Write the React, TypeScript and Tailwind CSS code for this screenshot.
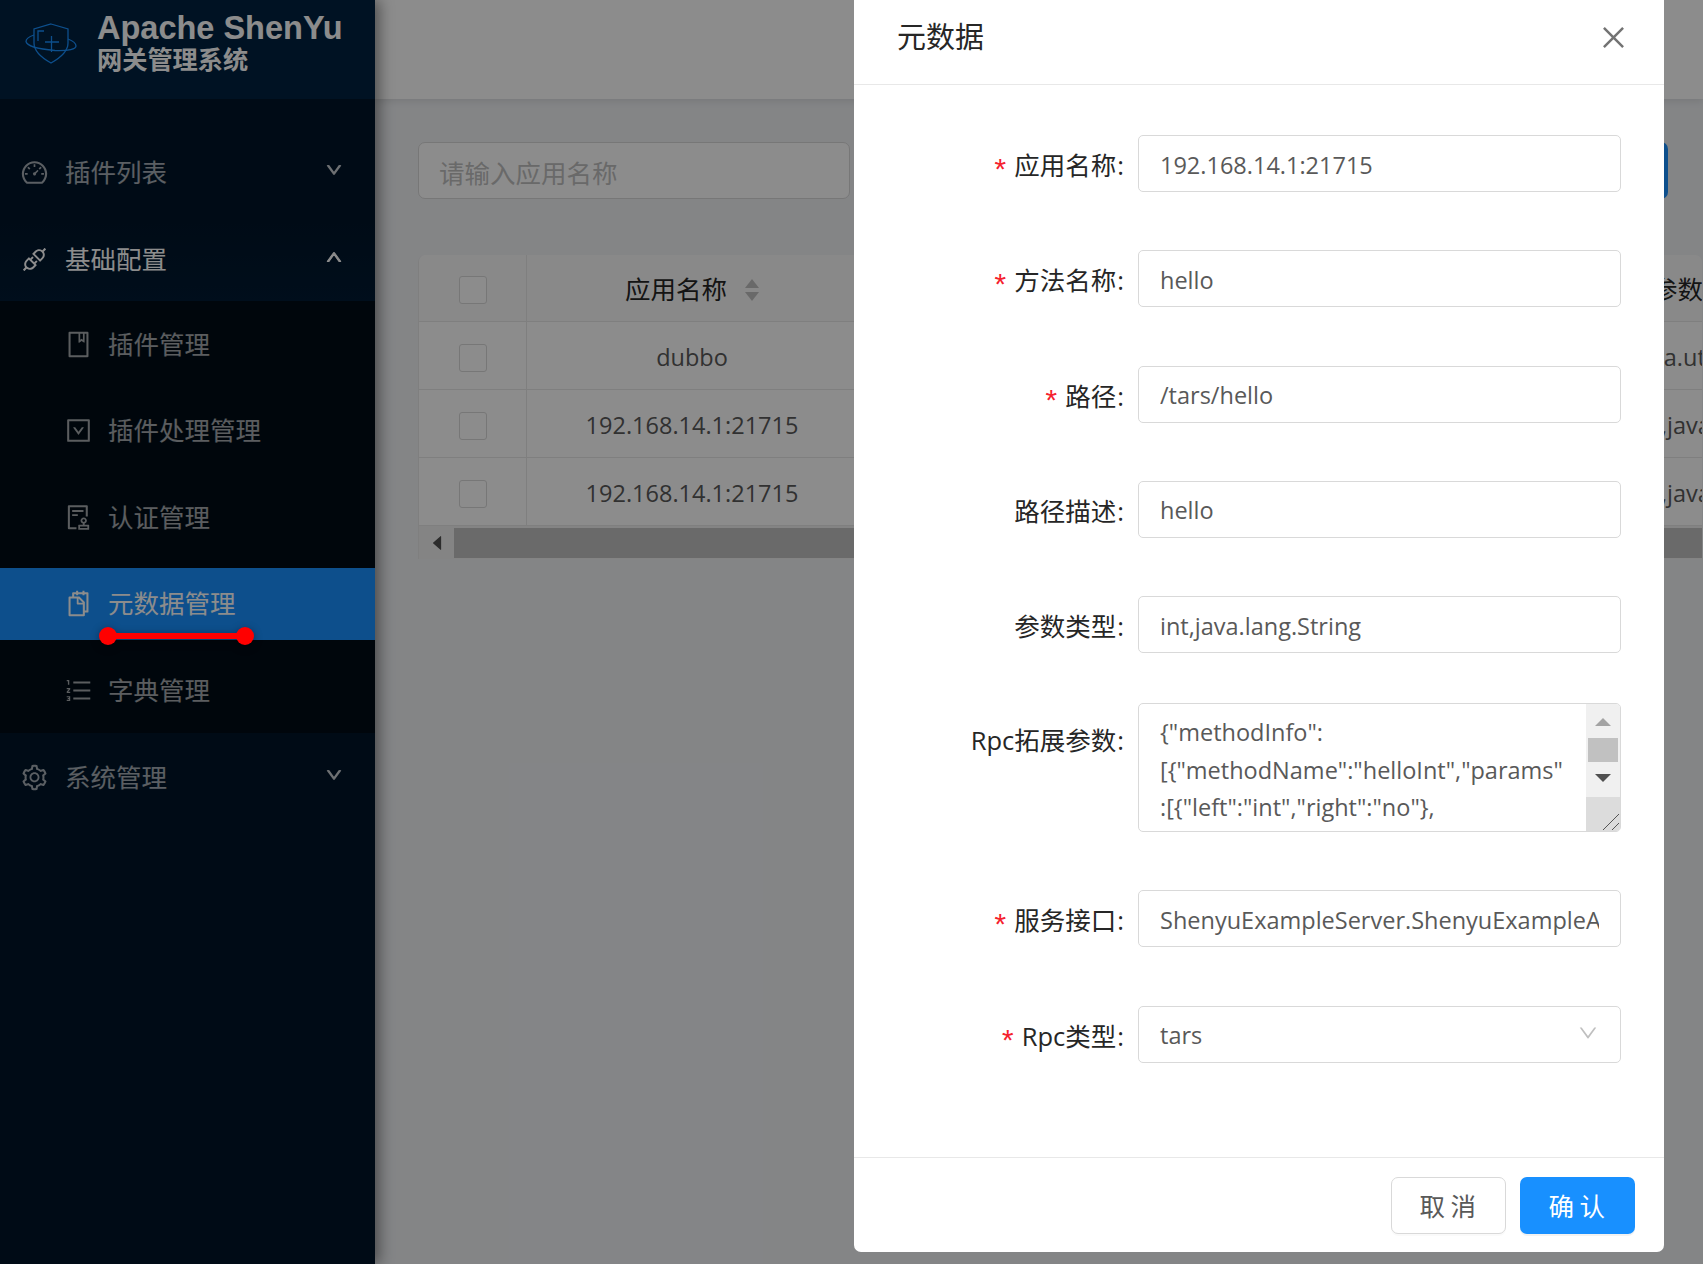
import {
  AiOutlineApi,
  AiOutlineAudit,
  AiOutlineBook,
  AiOutlineCaretDown,
  AiOutlineClose,
  AiOutlineDashboard,
  AiOutlineDown,
  AiOutlineDownSquare,
  AiOutlineOrderedList,
  AiOutlineSetting,
  AiOutlineSnippets,
  AiOutlineUp,
} from 'react-icons/ai'
import type { IconType } from 'react-icons'

const font = "font-['Open_Sans','Noto_Sans_CJK_SC',sans-serif]"

const subItems: { label: string; icon: IconType; active?: boolean }[] = [
  { label: '插件管理', icon: AiOutlineBook },
  { label: '插件处理管理', icon: AiOutlineDownSquare },
  { label: '认证管理', icon: AiOutlineAudit },
  { label: '元数据管理', icon: AiOutlineSnippets, active: true },
  { label: '字典管理', icon: AiOutlineOrderedList },
]

const rows = [
  { name: 'dubbo', tail: 'va.ut', offset: 'ml-[795px]' },
  { name: '192.168.14.1:21715', tail: ',java', offset: 'ml-[804px]' },
  { name: '192.168.14.1:21715', tail: ',java', offset: 'ml-[804px]' },
]

const fields = [
  { label: '应用名称', value: '192.168.14.1:21715', required: true },
  { label: '方法名称', value: 'hello', required: true },
  { label: '路径', value: '/tars/hello', required: true },
  { label: '路径描述', value: 'hello' },
  { label: '参数类型', value: 'int,java.lang.String' },
]

function Logo() {
  return (
    <svg width="52" height="42" viewBox="0 0 52 42" fill="none" stroke="#1890ff" strokeWidth="1.3" className="-translate-y-[6px]">
      <path d="M26 1 L43 6 V20 C43 29 35 35 26 40 C17 35 9 29 9 20 V6 Z" />
      <path d="M9 12 C3 14 1 17 1 18.5 C2 23 13 26 30 27.5 C44 28 51 26 51 23 C51 21 48 18 43 16" />
      <path d="M13 18 V8 H19 M20 19 H34 M26.5 13 V29" />
    </svg>
  )
}

function TopMenu({ label, icon: Icon, open }: { label: string; icon: IconType; open?: boolean }) {
  const Arrow = open ? AiOutlineUp : AiOutlineDown
  return (
    <div className={`flex h-[72px] items-center pl-[20px] pr-[32px] ${open ? 'text-white' : 'text-white/65'}`}>
      <Icon className="mr-[16px] h-[29px] w-[29px]" />
      <span className="flex-1 text-[25.5px]">{label}</span>
      <Arrow className="h-[18px] w-[18px] -translate-y-[2px] stroke-[60]" />
    </div>
  )
}

function Sidebar() {
  return (
    <aside className="relative z-10 flex h-full w-[375px] shrink-0 flex-col bg-[#001529] shadow-[4px_0_14px_rgba(0,0,0,0.45)]">
      <div className="flex h-[99px] items-center bg-[#002140] pl-[25px]">
        <Logo />
        <div className="ml-[20px] -translate-y-[8px] font-bold text-white">
          <div className="font-['Liberation_Sans',sans-serif] text-[32.5px] leading-[34px]">Apache ShenYu</div>
          <div className="text-[25.2px] leading-[28px]">网关管理系统</div>
        </div>
      </div>
      <div className="flex flex-col pt-[37px]">
        <TopMenu label="插件列表" icon={AiOutlineDashboard} />
        <div className="mt-[15px] bg-gradient-to-b from-[#001529] to-[#001a33] pb-[6px]">
          <TopMenu label="基础配置" icon={AiOutlineApi} open />
        </div>
        <div className="flex flex-col gap-[14.5px] bg-[#000c17] py-[7px]">
          {subItems.map(({ label, icon: Icon, active }) => (
            <div key={label} className={`flex h-[72px] items-center pl-[64px] ${active ? 'bg-[#1890ff] text-white' : 'text-white/65'}`}>
              <Icon className="mr-[15px] h-[29px] w-[29px]" />
              <span className="text-[25.5px]">{label}</span>
            </div>
          ))}
        </div>
        <div className="mt-[8px]">
          <TopMenu label="系统管理" icon={AiOutlineSetting} />
        </div>
      </div>
    </aside>
  )
}

function Checkbox() {
  return <span className="mt-[4px] block h-[28px] w-[28px] rounded-[3px] border border-[#d9d9d9] bg-white" />
}

function Table() {
  return (
    <div className="mt-[56px] w-[1284px] shrink-0 overflow-hidden rounded-t-[7px] border-l border-[#e8e8e8] text-[#595959]">
      <div className="flex h-[67px] items-center border-b border-[#e8e8e8] bg-[#fafafa] text-[25.5px] text-[#262626]">
        <div className="flex h-full w-[108px] shrink-0 items-center justify-center border-r border-[#e8e8e8]">
          <Checkbox />
        </div>
        <div className="flex w-[330px] shrink-0 items-center justify-center pt-[3px]">
          <span>应用名称</span>
          <span className="ml-[18px] flex flex-col gap-[4px]">
            <span className="h-0 w-0 border-x-[7.5px] border-b-[9px] border-x-transparent border-b-[#bfbfbf]" />
            <span className="h-0 w-0 border-x-[7.5px] border-t-[9px] border-x-transparent border-t-[#bfbfbf]" />
          </span>
        </div>
        <div className="ml-[795px] whitespace-nowrap pt-[3px]">参数</div>
      </div>
      {rows.map((row, i) => (
        <div key={i} className="flex h-[68px] items-center border-b border-[#e8e8e8] bg-white text-[23.5px]">
          <div className="flex h-full w-[108px] shrink-0 items-center justify-center border-r border-[#e8e8e8]">
            <Checkbox />
          </div>
          <div className="w-[330px] shrink-0 pt-[5px] text-center">{row.name}</div>
          <div className={`${row.offset} whitespace-nowrap pt-[5px]`}>{row.tail}</div>
        </div>
      ))}
      <div className="flex h-[33px] items-center bg-[#f1f1f1]">
        <div className="flex w-[35px] items-center justify-center text-[#505050]">
          <AiOutlineCaretDown className="h-[20px] w-[20px] rotate-90" />
        </div>
        <div className="h-[30px] flex-1 bg-[#c1c1c1]" />
      </div>
    </div>
  )
}

function Content() {
  return (
    <main className="relative flex h-full flex-1 flex-col overflow-hidden bg-[#f0f2f5]">
      <div className="h-[99px] shrink-0 bg-white shadow-[0_2px_8px_rgba(0,0,0,0.1)]" />
      <div className="pl-[43px] pt-[43px]">
        <div className="flex items-center">
          <input
            readOnly
            placeholder="请输入应用名称"
            className="h-[57px] w-[432px] shrink-0 rounded-[7px] border border-[#d9d9d9] bg-white px-[20px] pt-[4px] text-[25.5px] placeholder:text-[#bfbfbf]"
          />
          <div className="ml-[718px] h-[57px] w-[100px] shrink-0 rounded-[7px] bg-[#1890ff]" />
        </div>
        <Table />
      </div>
    </main>
  )
}

function Label({ text, required }: { text: string; required?: boolean }) {
  return (
    <label className="flex h-[57px] w-[284px] shrink-0 justify-end pr-[14px] pt-[2px] text-[25.5px] leading-[57px] text-[#262626]">
      {required && <span className="mr-[5px] translate-y-[8px] font-['Liberation_Mono',monospace] text-[30px] leading-[57px] text-[#f5222d]">*</span>}
      {text}
      <span className="ml-[1px]">:</span>
    </label>
  )
}

function TextInput({ value }: { value: string }) {
  return (
    <input
      readOnly
      value={value}
      className="h-[57px] w-[483px] rounded-[5px] border border-[#d9d9d9] bg-white px-[21px] pt-[2px] text-[23.5px] text-[#595959] outline-none"
    />
  )
}

function RpcTextarea() {
  return (
    <div className="relative h-[129px] w-[483px] overflow-hidden rounded-[5px] border border-[#d9d9d9] bg-white pl-[21px] pr-[36px] pt-[10px] text-[23.5px] leading-[37.5px] text-[#595959]">
      <div className="break-all">
        {'{"methodInfo":'}
        <br />
        {'[{"methodName":"helloInt","params"'}
        <br />
        {':[{"left":"int","right":"no"},'}
      </div>
      <div className="absolute inset-y-0 right-0 flex w-[34px] flex-col items-center bg-[#f0f0f0] pt-[14px]">
        <span className="h-0 w-0 border-x-[8px] border-b-[8px] border-x-transparent border-b-[#a3a3a3]" />
        <span className="mt-[12px] h-[24px] w-[30px] bg-[#c1c1c1]" />
        <span className="mt-[12px] h-0 w-0 border-x-[8px] border-t-[8px] border-x-transparent border-t-[#505050]" />
      </div>
      <div className="absolute bottom-0 right-0 h-[34px] w-[34px] bg-[#dcdcdc]">
        <svg width="34" height="34" viewBox="0 0 34 34" stroke="#555" strokeWidth="1">
          <path d="M17 33 L33 17 M26 33 L33 26" />
        </svg>
      </div>
    </div>
  )
}

function MetaModal() {
  return (
    <div className={`absolute left-[854px] top-0 flex h-[1252px] w-[810px] flex-col rounded-b-[7px] bg-white ${font}`}>
      <div className="flex h-[85px] shrink-0 items-center justify-between border-b border-[#e8e8e8] pb-[10px] pl-[43px] pr-[35px]">
        <span className="text-[29px] text-[#262626]">元数据</span>
        <AiOutlineClose className="h-[31px] w-[31px] text-[#737373]" />
      </div>
      <div className="flex flex-1 flex-col pt-[50px]">
        {fields.map((f) => (
          <div key={f.label} className="mb-[58.3px] flex">
            <Label text={f.label} required={f.required} />
            <TextInput value={f.value} />
          </div>
        ))}
        <div className="-mt-[8px] mb-[58px] flex">
          <div className="pt-[7px]">
            <Label text="Rpc拓展参数" />
          </div>
          <RpcTextarea />
        </div>
        <div className="mb-[58.5px] flex">
          <Label text="服务接口" required />
          <TextInput value="ShenyuExampleServer.ShenyuExampleApp.HelloObj" />
        </div>
        <div className="flex">
          <Label text="Rpc类型" required />
          <div className="flex h-[57px] w-[483px] items-center justify-between rounded-[5px] border border-[#d9d9d9] pl-[21px] pr-[21px] pt-[2px] text-[23.5px] text-[#595959]">
            <span>tars</span>
            <AiOutlineDown className="h-[22px] w-[22px] -translate-y-[2px] text-[#bfbfbf]" />
          </div>
        </div>
      </div>
      <div className="flex h-[95px] shrink-0 items-start justify-end gap-[14px] border-t border-[#e8e8e8] pr-[29px] pt-[19px]">
        <button className="h-[57px] w-[115px] rounded-[7px] border border-[#d9d9d9] bg-white pl-[4px] pt-[2px] text-[25.5px] tracking-[0.22em] text-[#595959] shadow-[0_2px_0_rgba(0,0,0,0.02)]">
          取消
        </button>
        <button className="h-[57px] w-[115px] rounded-[7px] bg-[#1890ff] pl-[4px] pt-[2px] text-[25.5px] tracking-[0.22em] text-white shadow-[0_2px_0_rgba(0,0,0,0.05)]">
          确认
        </button>
      </div>
    </div>
  )
}

export default function App() {
  return (
    <div className={`relative flex h-[1264px] w-[1703px] overflow-hidden ${font}`}>
      <Sidebar />
      <Content />
      {/* modal mask */}
      <div className="absolute inset-0 z-20 bg-black/45" />
      <div className="absolute inset-0 z-30">
        <MetaModal />
      </div>
      {/* red underline drawn over the screenshot */}
      <div className="absolute left-[99px] top-[627px] z-40 flex h-[18px] w-[155px] items-center drop-shadow-[0_2px_4px_rgba(0,0,0,0.4)]">
        <span className="h-[18px] w-[18px] shrink-0 rounded-full bg-[#ff0000]" />
        <span className="-mx-[1px] h-[6px] flex-1 bg-[#ff0000]" />
        <span className="h-[18px] w-[18px] shrink-0 rounded-full bg-[#ff0000]" />
      </div>
    </div>
  )
}
